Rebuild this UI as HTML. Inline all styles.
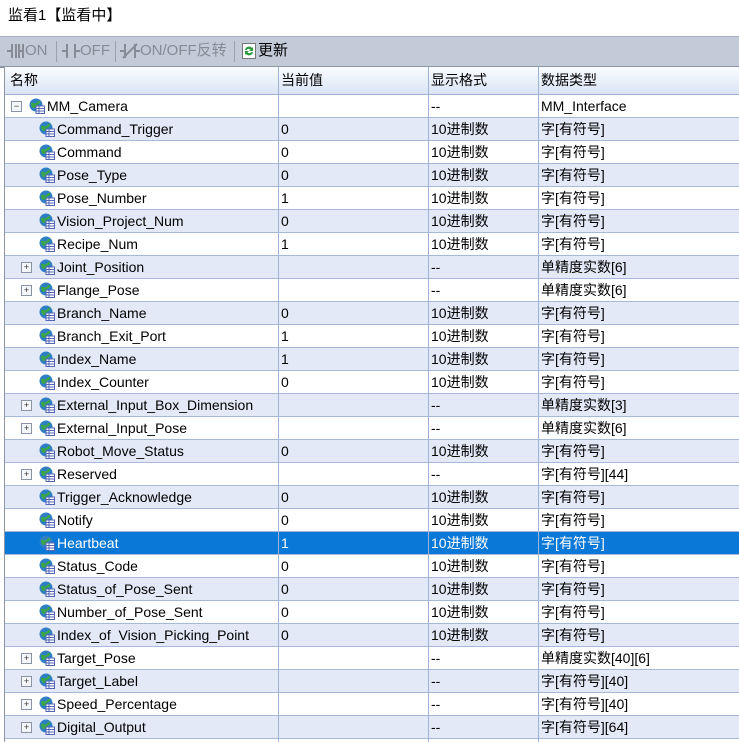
<!DOCTYPE html>
<html><head><meta charset="utf-8"><style>
body{margin:0;width:739px;height:742px;overflow:hidden;background:#fff;font-family:"Liberation Sans","Noto Sans CJK SC",sans-serif;font-size:14px;color:#000;position:relative}
.title{position:absolute;left:8px;top:7px;font-size:15px;line-height:18px}
.tb{position:absolute;left:0;top:36px;width:739px;height:29px;background:#c3cad8;border-top:1px solid #a9b1c0;border-bottom:2px solid #8d96a6}
.tb span{position:absolute;top:5px;color:#868b95;font-size:15px;line-height:18px}
.tb svg{position:absolute}
.sep{position:absolute;top:4px;width:1px;height:21px;background:#9aa2b0}
.grid{position:absolute;left:4px;top:67px;width:735px;height:675px;border-left:1px solid #8f96a3}
.hdr{position:absolute;left:0;top:0;width:735px;height:27px;background:linear-gradient(#fafcff,#d9e4f4);border-bottom:1px solid #9fb3d6}
.hdr span{position:absolute;top:5px;line-height:17px}
.row{position:absolute;left:0;width:735px;height:22px;border-bottom:1px solid #a7b8da}
.row.o{background:#e4e9f7}
.row.sel{background:#0a78d7;color:#fff}
.row span{position:absolute;top:3px;white-space:nowrap;line-height:17px;height:17px}
.vl{position:absolute;top:0;width:1px;height:675px;background:#9fb3d6}
.ex{position:absolute;top:6px;width:9px;height:9px;border:1px solid #8a93a3;background:#f4f6fa;font-size:9px;line-height:9px;text-align:center;color:#333}
.ic{position:absolute;top:3px}
</style></head><body>
<svg width="0" height="0" style="position:absolute"><defs>
<symbol id="g" viewBox="0 0 16 16"><circle cx="7" cy="7" r="6.5" fill="#2f7fc4"/><path d="M2 5c2-1 3 1 5 0s2-3 4-2c1 2-1 3-3 4s-1 3-3 3-3-2-3-5z" fill="#3aa54a"/><rect x="7" y="8" width="8.5" height="7.5" fill="#fff" stroke="#5266b5"/><path d="M7 10.5h8.5M7 13h8.5M10 8v7.5" stroke="#5266b5"/></symbol>
</defs></svg>
<div class="title">监看1【监看中】</div>
<div class="tb">
<svg style="left:7px;top:5px" width="18" height="18" viewBox="0 0 18 18" fill="none" stroke="#868b95" stroke-width="2"><path d="M0 9h5M5 2v14M9 2v14M12 2v14M16 2v14M12 9h4"/></svg>
<span style="left:25px">ON</span><div class="sep" style="left:56px"></div>
<svg style="left:62px;top:5px" width="18" height="18" viewBox="0 0 18 18" fill="none" stroke="#868b95" stroke-width="2"><path d="M0 9h5M5 2v14M13 2v14M13 9h5"/></svg>
<span style="left:80px">OFF</span><div class="sep" style="left:115px"></div>
<svg style="left:120px;top:5px" width="20" height="18" viewBox="0 0 20 18" fill="none" stroke="#868b95" stroke-width="2"><path d="M0 9h5M5 2v14M15 2v14M15 9h5M3 16L17 2"/></svg>
<span style="left:140px">ON/OFF反转</span><div class="sep" style="left:234px"></div>
<svg style="left:242px;top:6px" width="14" height="16" viewBox="0 0 14 16"><rect x=".5" y=".5" width="13" height="15" fill="#fff" stroke="#777"/><path d="M3 7a4 4 0 0 1 7-2l1-1v4H7l1.5-1.3A2.5 2.5 0 0 0 4.5 7zM11 9a4 4 0 0 1-7 2l-1 1V8h4l-1.5 1.3A2.5 2.5 0 0 0 9.5 9z" fill="#2a9a3a"/></svg>
<span style="left:258px;color:#000">更新</span>
</div>
<div class="grid">
<div class="hdr"><span style="left:5px">名称</span><span style="left:276px">当前值</span><span style="left:426px">显示格式</span><span style="left:536px">数据类型</span></div>
<div id="rows"></div>
<div class="vl" style="left:273px"></div><div class="vl" style="left:423px"></div><div class="vl" style="left:533px"></div>
</div>
<script>
var d=[["MM_Camera","r","","--","MM_Interface"],
["Command_Trigger","","0"],["Command","","0"],["Pose_Type","","0"],["Pose_Number","","1"],["Vision_Project_Num","","0"],["Recipe_Num","","1"],
["Joint_Position","+","","--","单精度实数[6]"],["Flange_Pose","+","","--","单精度实数[6]"],
["Branch_Name","","0"],["Branch_Exit_Port","","1"],["Index_Name","","1"],["Index_Counter","","0"],
["External_Input_Box_Dimension","+","","--","单精度实数[3]"],["External_Input_Pose","+","","--","单精度实数[6]"],
["Robot_Move_Status","","0"],["Reserved","+","","--","字[有符号][44]"],
["Trigger_Acknowledge","","0"],["Notify","","0"],["Heartbeat","","1"],["Status_Code","","0"],["Status_of_Pose_Sent","","0"],["Number_of_Pose_Sent","","0"],["Index_of_Vision_Picking_Point","","0"],
["Target_Pose","+","","--","单精度实数[40][6]"],["Target_Label","+","","--","字[有符号][40]"],["Speed_Percentage","+","","--","字[有符号][40]"],["Digital_Output","+","","--","字[有符号][64]"]];
var h="";
d.forEach(function(r,i){
var cls="row"+(i%2?" o":"")+(i==19?" sel":"");
var root=r[1]=="r";var ix=root?24:34,tx=root?42:52;
var ex="";
if(root)ex='<div class="ex" style="left:6px">−</div>';
else if(r[1]=="+")ex='<div class="ex" style="left:16px">+</div>';
var fmt=r[3]!==undefined?r[3]:"10进制数",typ=r[4]||"字[有符号]";
h+='<div class="'+cls+'" style="top:'+(28+23*i)+'px">'+ex+'<svg class="ic" style="left:'+ix+'px" width="16" height="16"><use href="#g"/></svg><span style="left:'+tx+'px">'+r[0]+'</span><span style="left:276px">'+r[2]+'</span><span style="left:426px">'+fmt+'</span><span style="left:536px">'+typ+'</span></div>';
});
document.getElementById("rows").innerHTML=h;
</script>
</body></html>
